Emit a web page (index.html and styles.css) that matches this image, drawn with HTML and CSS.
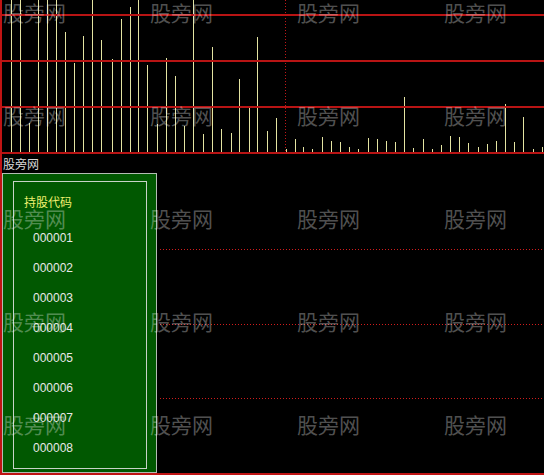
FILE: index.html
```html
<!DOCTYPE html>
<html lang="zh-CN">
<head>
<meta charset="utf-8">
<title>股旁网</title>
<link rel="stylesheet" href="styles.css">
</head>
<body>
<div class="screen">
  <svg class="volume" width="542" height="154" viewBox="2 0 542 154">
    <path class="volume-bars" d="M11.5 0V153 M20.5 0V153 M29.5 123V153 M38.5 0V153 M47.5 0V153 M56.5 0V153 M65.5 32V153 M74.5 63V153 M83.5 36V153 M92.5 0V153 M101.5 40V153 M112.5 59V153 M121.5 19V153 M130.5 7V153 M138.5 0V153 M147.5 65V153 M157.5 124V153 M166.5 58V153 M175.5 76V153 M184.5 126V153 M193.5 0V153 M203.5 134V153 M212.5 47V153 M221.5 129V153 M231.5 133V153 M239.5 79V153 M249.5 108V153 M257.5 37V153 M267.5 131V153 M276.5 118V153 M286.5 149V153 M295.5 139V153 M303.5 147V153 M312.5 149V153 M322.5 137V153 M331.5 141V153 M340.5 142V153 M349.5 147V153 M358.5 149V153 M368.5 138V153 M377.5 139V153 M386.5 141V153 M395.5 142V153 M404.5 97V153 M413.5 148V153 M423.5 139V153 M432.5 149V153 M441.5 145V153 M450.5 136V153 M459.5 137V153 M468.5 143V153 M478.5 147V153 M487.5 144V153 M496.5 141V153 M505.5 104V153 M514.5 142V153 M523.5 117V153 M533.5 149V153 M542.5 147V153"/>
    <path class="volume-divider" d="M285.5 0V153"/>
    <path class="volume-grid" d="M2 15H544 M2 61H544 M2 107H544 M2 153H544"/>
  </svg>
  <div class="caption">股旁网</div>
  <div class="lower">
    <div class="holdings">
      <div class="holdings-inner">
        <div class="holdings-title">持股代码</div>
        <ul class="codes">
          <li>000001</li>
          <li>000002</li>
          <li>000003</li>
          <li>000004</li>
          <li>000005</li>
          <li>000006</li>
          <li>000007</li>
          <li>000008</li>
        </ul>
      </div>
    </div>
    <div class="bands">
      <div class="band band--first"></div>
      <div class="band"></div>
      <div class="band band--short"></div>
      <div class="band band--short band--last"></div>
    </div>
  </div>
  <div class="watermarks">
    <span>股旁网</span><span>股旁网</span><span>股旁网</span><span>股旁网</span>
    <span>股旁网</span><span>股旁网</span><span>股旁网</span><span>股旁网</span>
    <span>股旁网</span><span>股旁网</span><span>股旁网</span><span>股旁网</span>
    <span>股旁网</span><span>股旁网</span><span>股旁网</span><span>股旁网</span>
    <span>股旁网</span><span>股旁网</span><span>股旁网</span><span>股旁网</span>
  </div>
</div>
</body>
</html>
```

FILE: styles.css
```css
html, body {
  margin: 0;
  padding: 0;
  background: #000;
}

body {
  width: 544px;
  height: 475px;
  overflow: hidden;
  font-family: "Liberation Sans", "Noto Sans CJK SC", sans-serif;
}

.screen {
  position: relative;
  width: 542px;
  height: 475px;
  border-left: 2px solid #c01414;
  overflow: hidden;
}

.volume {
  display: block;
}

.volume-bars {
  stroke: #e4e4a2;
  stroke-width: 1;
  fill: none;
}

.volume-divider {
  stroke: #c01818;
  stroke-width: 1;
  stroke-dasharray: 1 2;
  fill: none;
}

.volume-grid {
  stroke: #b81414;
  stroke-width: 2;
  fill: none;
}

.caption {
  height: 19px;
  line-height: 19px;
  padding-left: 1px;
  font-family: "Noto Sans CJK SC", sans-serif;
  font-size: 12px;
  color: #d8d8d8;
}

.lower {
  display: flex;
  height: 300px;
  border-bottom: 2px solid #c01414;
}

.holdings {
  box-sizing: border-box;
  flex: 0 0 155px;
  height: 300px;
  padding: 7px 9px 3px 10px;
  background: #015801;
  border: 1px solid #b4bcb4;
}

.holdings-inner {
  box-sizing: border-box;
  height: 100%;
  padding: 10px 0 0 10px;
  border: 1px solid #c8d2c8;
}

.holdings-title {
  font-family: "Noto Sans CJK SC", sans-serif;
  font-size: 12px;
  line-height: 20px;
  margin-bottom: 11px;
  color: #f0f070;
}

.codes {
  list-style: none;
  margin: 0;
  padding: 0 0 0 9px;
}

.codes li {
  height: 30px;
  line-height: 30px;
  font-size: 12px;
  color: #e8e8e8;
}

.bands {
  flex: 1;
  display: flex;
  flex-direction: column;
  padding-left: 3px;
}

.band {
  height: 75px;
  background: linear-gradient(90deg, #d01c1c 1px, transparent 1px) left bottom / 3px 1px repeat-x;
}

.band--first {
  height: 77px;
}

.band--short {
  height: 74px;
}

.band--last {
  background: none;
}

.watermarks {
  position: absolute;
  left: 1px;
  top: 0;
  display: grid;
  grid-template-columns: repeat(4, 147px);
  grid-auto-rows: 103px;
  font-family: "Noto Sans CJK SC", sans-serif;
  font-size: 21px;
  line-height: 24px;
  color: rgba(255, 255, 255, 0.32);
  pointer-events: none;
}
```
